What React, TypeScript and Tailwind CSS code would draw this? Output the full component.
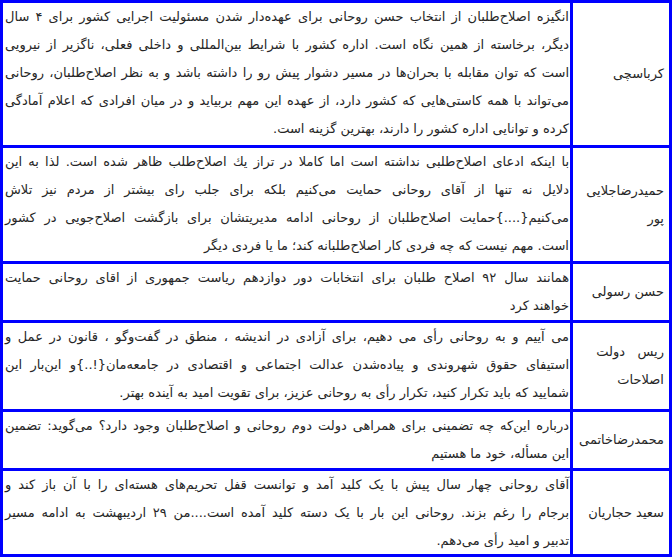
import React from "react";

type Row = { name: string[]; lines: string[]; h: string };

const rows: Row[] = [
  {
    name: ["کرباسچی"],
    h: "h-[145px]",
    lines: [
      "انگیزه اصلاح‌طلبان از انتخاب حسن روحانی برای عهده‌دار شدن مسئولیت اجرایی کشور برای ۴ سال",
      "دیگر، برخاسته از همین نگاه است. اداره کشور با شرایط بین‌المللی و داخلی فعلی، ناگزیر از نیرویی",
      "است که توان مقابله با بحران‌ها در مسیر دشوار پیش رو را داشته باشد و به نظر اصلاح‌طلبان، روحانی",
      "می‌تواند با همه کاستی‌هایی که کشور دارد، از عهده این مهم بربیاید و در میان افرادی که اعلام آمادگی",
      "کرده و توانایی اداره کشور را دارند، بهترین گزینه است.",
    ],
  },
  {
    name: ["حمیدرضاجلایی", "پور"],
    h: "h-[116px]",
    lines: [
      "با اینکه ادعای اصلاح‌طلبی نداشته است اما کاملا در تراز يك اصلاح‌طلب ظاهر شده است. لذا به این",
      "دلایل نه تنها از آقای روحانی حمایت می‌کنیم بلکه برای جلب رای بیشتر از مردم نیز تلاش",
      "می‌کنیم{....}حمایت اصلاح‌طلبان از روحانی ادامه مدیریتشان برای بازگشت اصلاح‌جویی در کشور",
      "است. مهم نیست که چه فردی کار اصلاح‌طلبانه کند؛ ما یا فردی دیگر",
    ],
  },
  {
    name: ["حسن رسولی"],
    h: "h-[59px]",
    lines: [
      "همانند سال ۹۲ اصلاح طلبان برای انتخابات دور دوازدهم ریاست جمهوری از اقای روحانی حمایت",
      "خواهند کرد",
    ],
  },
  {
    name: ["ریس\u00a0\u00a0 دولت", "اصلاحات"],
    h: "h-[89px]",
    lines: [
      "می آییم و به روحانی رأی می دهیم، برای آزادی در اندیشه ، منطق در گفت‌وگو ، قانون در عمل و",
      "استیفای حقوق شهروندی و پیاده‌شدن عدالت اجتماعی و اقتصادی در جامعه‌مان{!..}و این‌بار این",
      "شمایید که باید تکرار کنید، تکرار رأی به روحانی عزیز، برای تقویت امید به آینده بهتر.",
    ],
  },
  {
    name: ["محمدرضاخاتمی"],
    h: "h-[59px]",
    lines: [
      "درباره این‌که چه تضمینی برای همراهی دولت دوم روحانی و اصلاح‌طلبان وجود دارد؟ می‌گوید: تضمین",
      "این مسأله، خود ما هستیم",
    ],
  },
  {
    name: ["سعید حجاریان"],
    h: "h-[83px]",
    lines: [
      "آقای روحانی چهار سال پیش با یک کلید آمد و توانست قفل تحریم‌های هسته‌ای را با آن باز کند و",
      "برجام را رغم بزند. روحانی این بار با یک دسته کلید آمده است....من ۲۹ اردیبهشت به ادامه مسیر",
      "تدبیر و امید رأی می‌دهم.",
    ],
  },
];

export default function App() {
  return (
    <div
      dir="rtl"
      className="w-full h-[557px] overflow-hidden bg-white border-[3px] border-[#0000ff] flex flex-col text-[#262626] text-[13px] leading-[28px]"
      style={{ fontFamily: '"DejaVu Sans", "Noto Sans", sans-serif' }}
    >
      {rows.map((r, i) => (
        <div
          key={i}
          className={`flex shrink-0 ${r.h} ${i < rows.length - 1 ? "border-b-[3px] border-[#0000ff]" : ""}`}
        >
          <div className="w-[99px] shrink-0 border-l-[3px] border-[#0000ff] flex flex-col justify-center pr-[5px] whitespace-nowrap">
            {r.name.map((n, j) => (
              <div key={j}>{n}</div>
            ))}
          </div>
          <div className="flex-1 min-w-0 pr-px pl-[2px] whitespace-nowrap">
            {r.lines.map((l, j) => (
              <div
                key={j}
                className={
                  j < r.lines.length - 1
                    ? "text-justify [text-align-last:justify]"
                    : "text-start"
                }
              >
                {l}
              </div>
            ))}
          </div>
        </div>
      ))}
    </div>
  );
}
